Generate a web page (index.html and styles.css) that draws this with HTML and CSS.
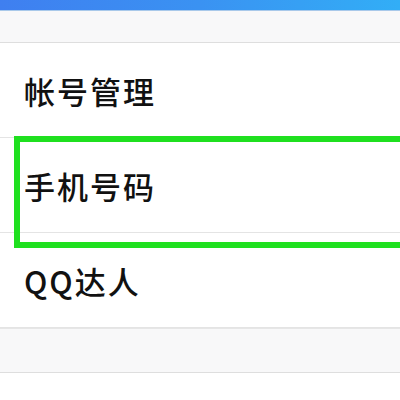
FILE: index.html
```html
<!DOCTYPE html>
<html lang="zh-CN">
<head>
<meta charset="utf-8">
<link rel="stylesheet" href="styles.css">
</head>
<body>
<div class="topbar"></div>
<div class="gap gap-top"></div>
<div class="list">
  <div class="row">帐号管理</div>
  <div class="row">手机号码</div>
  <div class="row">QQ达人</div>
</div>
<div class="gap gap-mid"></div>
<div class="list">
  <div class="row">消息通知</div>
</div>
<div class="highlight"></div>
</body>
</html>
```

FILE: styles.css
```css
html, body {
  margin: 0;
  padding: 0;
  background: #ffffff;
  overflow: hidden;
}
body {
  width: 400px;
  height: 400px;
  position: relative;
  font-family: "Noto Sans CJK SC", "Noto Sans", sans-serif;
  color: #111111;
}
.topbar {
  height: 10px;
  background: linear-gradient(to right, #3f7ff0 0%, #3a92f2 50%, #32aef6 100%);
  border-bottom: 1px solid #a9c9ea;
}
.gap {
  background: #f8f8f9;
  border-bottom: 1px solid #dedede;
}
.gap-top {
  height: 31px;
}
.gap-mid {
  height: 43px;
  border-top: 1px solid #e6e6e6;
}
.list {
  background: #ffffff;
}
.row {
  height: 94px;
  display: flex;
  align-items: center;
  padding-left: 24px;
  font-size: 31px;
  font-weight: 500;
  letter-spacing: 2px;
  border-bottom: 1px solid #e4e4e4;
}
.highlight {
  position: absolute;
  left: 14px;
  top: 136px;
  width: 380px;
  height: 100px;
  border: 6px solid #1fe01f;
  border-right: none;
}
```
